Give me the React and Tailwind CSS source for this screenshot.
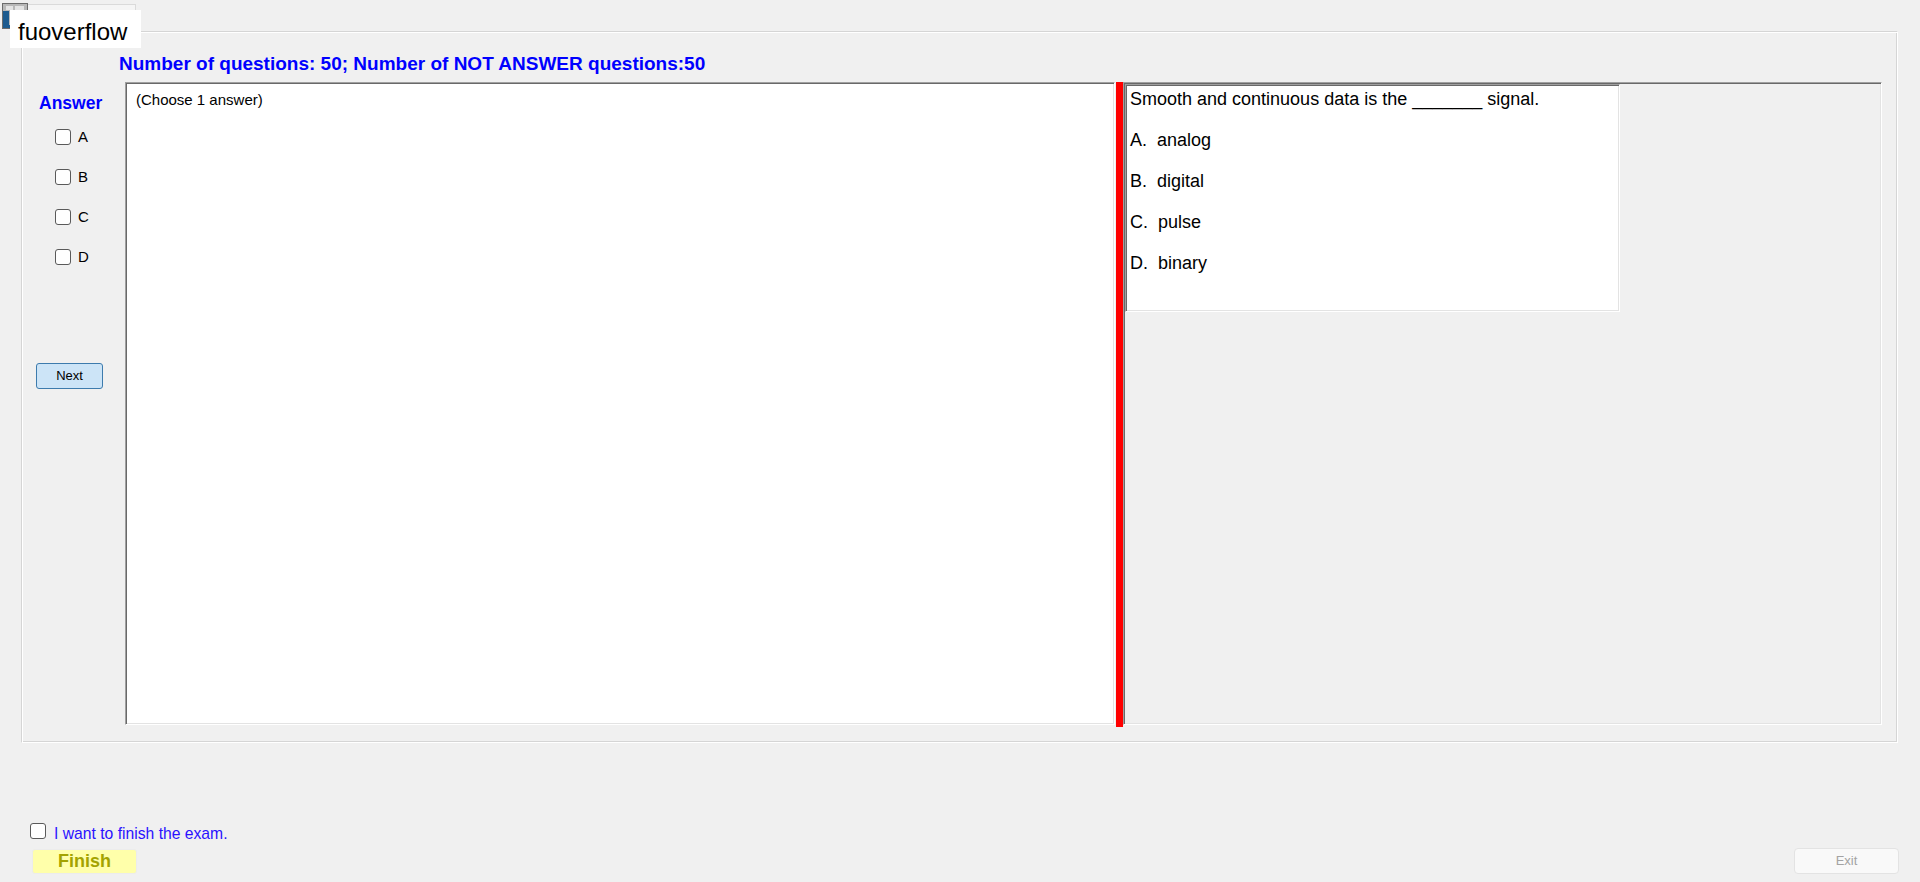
import React from "react";

const OPTIONS = ["A", "B", "C", "D"];
const ANSWERS = [
  ["A.", "analog"],
  ["B.", "digital"],
  ["C.", "pulse"],
  ["D.", "binary"],
];

function Box({ className = "" }) {
  return (
    <span
      className={
        "block w-[16px] h-[16px] rounded-[3px] border border-[#5a5a5a] bg-white shrink-0 " +
        className
      }
    />
  );
}

function AppIcon() {
  return (
    <svg width="26" height="26" viewBox="0 0 26 26" className="absolute left-[2px] top-[3px]">
      <rect x="0.5" y="0.5" width="25" height="25" fill="#b8b8b8" stroke="#6c6c6c" />
      <rect x="4" y="3" width="7" height="4" fill="#e4e4e4" />
      <rect x="13" y="3" width="9" height="4" fill="#e4e4e4" />
      <path d="M1 8h6v14h18v3H1z" fill="#1d5b8f" />
    </svg>
  );
}

export default function App() {
  return (
    <div className="relative w-[1920px] h-[882px] overflow-hidden bg-[#f0f0f0] font-['Liberation_Sans',Arial,sans-serif] text-black">
      {/* caption strip behind the title label */}
      <div className="absolute left-[27px] top-[4px] w-[109px] h-[30px] border border-[#dadada] bg-[#f5f5f5]" />
      <AppIcon />
      <div className="absolute left-[10px] top-[10px] w-[131px] h-[38px] bg-white pl-[8px] pt-[3px] text-[24px] leading-[38px] z-10">
        fuoverflow
      </div>

      {/* exam group box */}
      <div className="ml-[21px] mt-[31px] w-[1877px] h-[712px] border border-[#d5d5d5] border-r-white border-b-white shadow-[inset_1px_1px_0_#ffffff,inset_-1px_-1px_0_#d5d5d5] flex flex-col">
        <div className="mt-[21px] pl-[97px] text-[19px] leading-[22px] font-bold text-[#0000ff]">
          Number of questions: 50; Number of NOT ANSWER questions:50
        </div>

        <div className="mt-[7px] flex items-start">
          {/* answer column */}
          <div className="w-[103px] flex flex-col pt-[10.7px]">
            <div className="pl-[17px] text-[17.5px] leading-[20px] font-bold text-[#0000ff]">
              Answer
            </div>
            <div className="mt-[14px] pl-[33px] flex flex-col gap-[20px]">
              {OPTIONS.map((o) => (
                <div key={o} className="h-[20px] flex items-center gap-[7px]">
                  <Box />
                  <span className="text-[15px] leading-[20px]">{o}</span>
                </div>
              ))}
            </div>
            <button className="mt-[96.5px] ml-[14px] w-[67px] h-[26px] rounded-[3px] border border-[#3d7bad] bg-[#cce4f7] text-[13px] leading-[24px] text-black">
              Next
            </button>
          </div>

          {/* answer explanation box */}
          <div className="w-[990px] h-[643px] bg-white border border-t-[#a0a0a0] border-l-[#a0a0a0] border-r-white border-b-white shadow-[inset_1px_1px_0_#696969,inset_-1px_-1px_0_#e3e3e3] pl-[10px] pt-[8px]">
            <div className="text-[15px] leading-[17px]">(Choose 1 answer)</div>
          </div>

          {/* splitter */}
          <div className="ml-[1px] w-[7px] h-[645px] bg-[#ff0000]" />

          {/* question panel */}
          <div className="w-[759px] h-[643px] border border-t-[#a0a0a0] border-l-[#a0a0a0] border-r-white border-b-white shadow-[inset_1px_1px_0_#696969,inset_-1px_-1px_0_#e3e3e3] p-[1px]">
            <div className="w-[495px] h-[228px] bg-white border border-t-[#a0a0a0] border-l-[#a0a0a0] border-r-white border-b-white shadow-[inset_1px_1px_0_#696969,inset_-1px_-1px_0_#e3e3e3] pl-[4px] pt-[4px] flex flex-col gap-[20px] text-[18px] leading-[21px]">
              <div>Smooth and continuous data is the _______ signal.</div>
              {ANSWERS.map(([k, v]) => (
                <div key={k} className="whitespace-pre">
                  {k}  {v}
                </div>
              ))}
            </div>
          </div>
        </div>
      </div>

      {/* finish controls */}
      <div className="flex justify-between items-end">
        <div className="ml-[30px] mt-[79px] flex flex-col">
          <div className="flex items-start gap-[8px]">
            <Box className="mt-[1px]" />
            <span className="mt-[3px] text-[15.7px] leading-[18px] text-[#2a12ff]">
              I want to finish the exam.
            </span>
          </div>
          <button className="mt-[6px] ml-[2px] w-[105px] h-[25px] rounded-[3px] border border-[#ececec] bg-[#ffffaa] text-[18px] leading-[23px] font-bold text-[#a3a300]">
            Finish
          </button>
        </div>
        <button className="mr-[21px] w-[105px] h-[26px] rounded-[4px] border border-[#e3e3e3] bg-[#f9f9f9] text-[13px] leading-[24px] text-[#a3a3a3]">
          Exit
        </button>
      </div>
    </div>
  );
}
